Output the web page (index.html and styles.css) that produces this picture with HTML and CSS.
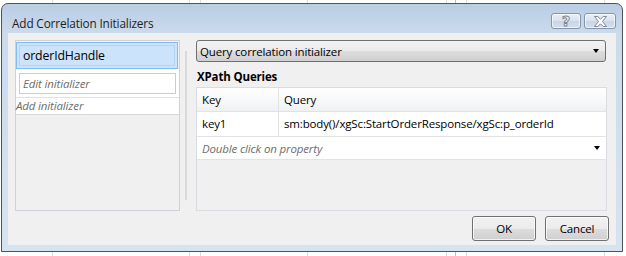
FILE: index.html
```html
<!DOCTYPE html>
<html>
<head>
<meta charset="utf-8">
<link rel="stylesheet" href="styles.css">
</head>
<body>
<div class="desktop">
  <div class="window">
    <div class="titlebar">
      <span class="title">Add Correlation Initializers</span>
      <div class="tb-buttons">
        <div class="tb-btn help"><span class="help-glyph">?</span></div>
        <div class="tb-btn close">
          <svg width="15" height="11" viewBox="0 0 15 11"><path d="M1.5 0.5 H4.8 L7.5 3.2 L10.2 0.5 H13.5 L9.5 5.5 L13.5 10.5 H10.2 L7.5 7.8 L4.8 10.5 H1.5 L5.5 5.5 Z" fill="#fff" stroke="#7d8796" stroke-width="1" stroke-linejoin="round"/></svg>
        </div>
      </div>
    </div>
    <div class="client">
      <div class="main">
        <div class="left-panel">
          <div class="item selected"><span class="item-text">orderIdHandle</span></div>
          <div class="edit-area"><div class="edit">Edit initializer</div></div>
          <div class="add-row">Add initializer</div>
        </div>
        <div class="splitter"><div class="split-line"></div></div>
        <div class="right-panel">
          <div class="combo"><span>Query correlation initializer</span><span class="arrow"></span></div>
          <div class="section-title">XPath Queries</div>
          <div class="grid-box">
            <div class="row header"><div class="cell key">Key</div><div class="cell">Query</div></div>
            <div class="row"><div class="cell key">key1</div><div class="cell">sm:body()/xgSc:StartOrderResponse/xgSc:p_orderId</div></div>
            <div class="new-row"><span>Double click on property</span><span class="arrow"></span></div>
          </div>
        </div>
      </div>
      <div class="buttons">
        <div class="btn">OK</div>
        <div class="btn">Cancel</div>
      </div>
    </div>
  </div>
</div>
</body>
</html>
```

FILE: styles.css
```css
* { box-sizing: border-box; }
html, body { margin: 0; padding: 0; }
body {
  width: 626px;
  height: 256px;
  overflow: hidden;
  font-family: "Open Sans", "Noto Sans", sans-serif;
  font-size: 11.5px;
  letter-spacing: -0.15px;
  color: #000;
  background-color: #fff;
  background-image:
    linear-gradient(#dcdcdc, #dcdcdc),
    linear-gradient(#dcdcdc, #dcdcdc),
    linear-gradient(#dcdcdc, #dcdcdc),
    linear-gradient(#dcdcdc, #dcdcdc),
    linear-gradient(#dcdcdc, #dcdcdc),
    linear-gradient(#a9c4e4, #a9c4e4),
    linear-gradient(#dcdcdc, #dcdcdc),
    linear-gradient(#dcdcdc, #dcdcdc);
  background-size: 1px 256px;
  background-repeat: no-repeat;
  background-position: 52px 0, 189px 0, 200px 0, 307px 0, 446px 0, 455px 0, 466px 0, 604px 0;
}
.desktop { padding: 3px 0 0 1px; }
.window {
  width: 622px;
  height: 249px;
  border: 1px solid #4f5358;
  border-radius: 7px 7px 0 0;
  background: linear-gradient(#b9cde3 0px, #cbdbec 30px, #d6e3f1 100%);
  display: flex;
  flex-direction: column;
}
.titlebar {
  height: 29px;
  display: flex;
  align-items: flex-start;
  justify-content: space-between;
  padding: 0 6px 0 10px;
}
.title {
  font-size: 11.8px;
  color: #1e1e1e;
  line-height: 16px;
  margin-top: 11px;
}
.tb-buttons {
  display: flex;
  gap: 3px;
  margin-top: 9px;
}
.tb-btn {
  height: 16px;
  border: 1px solid #8596ac;
  border-radius: 3px;
  background: linear-gradient(#e9f0f8, #d7e2ee 50%, #c8d6e6 51%, #d3dfec);
  box-shadow: inset 0 0 0 1px rgba(255,255,255,0.6);
  display: flex;
  align-items: center;
  justify-content: center;
}
.tb-btn.help { width: 30px; }
.tb-btn.close { width: 32px; }
.help-glyph {
  font-family: "DejaVu Sans", sans-serif;
  font-weight: bold;
  font-size: 14px;
  line-height: 13px;
  letter-spacing: 0;
  color: #fff;
  -webkit-text-stroke: 1px #7d8796;
}
.client {
  flex: 1;
  margin: 0 6px 6px 6px;
  background: #f0f0f0;
  padding: 7px 7px 4px 7px;
  display: flex;
  flex-direction: column;
}
.main {
  height: 171px;
  display: flex;
}
.left-panel {
  width: 165px;
  border: 1px solid #cfd3d8;
  padding: 1px 1px 0 0;
  display: flex;
  flex-direction: column;
}
.item.selected {
  height: 27px;
  background: #cce4fb;
  border: 1px solid #84bdf0;
  padding: 2px;
  display: flex;
}
.item-text {
  flex: 1;
  border: 1px solid #b4d4f2;
  padding-left: 3px;
  line-height: 19px;
  font-size: 12.3px;
}
.edit-area {
  background: #fff;
  padding: 4px 3px 3px 3px;
  margin-right: -1px;
}
.edit {
  height: 21px;
  border: 1px solid #c9cdd2;
  background: #fff;
  color: #6d6d6d;
  font-style: italic;
  padding-left: 3px;
  line-height: 19px;
}
.add-row {
  height: 18px;
  background: #fff;
  border-top: 1px solid #e1e1e1;
  border-bottom: 1px solid #d6d6d6;
  color: #6d6d6d;
  font-style: italic;
  line-height: 16px;
  margin-right: -1px;
}
.splitter {
  width: 15px;
  padding: 11px 0 11px 5px;
}
.split-line {
  width: 2px;
  height: 100%;
  background: #d9d9d9;
}
.right-panel {
  width: 412px;
  display: flex;
  flex-direction: column;
}
.combo {
  height: 22px;
  margin: 0 1px;
  border: 1px solid #707070;
  border-radius: 3px;
  background: linear-gradient(#f2f2f2, #ebebeb 50%, #dddddd 51%, #cfcfcf);
  display: flex;
  align-items: center;
  justify-content: space-between;
  padding: 0 6px 0 3px;
}
.arrow {
  width: 0;
  height: 0;
  border-left: 3.5px solid transparent;
  border-right: 3.5px solid transparent;
  border-top: 4px solid #000;
}
.section-title {
  margin-top: 5px;
  height: 20px;
  line-height: 20px;
  font-weight: bold;
  padding-left: 2px;
}
.grid-box {
  flex: 1;
  border: 1px solid #d9dde2;
  margin-left: 1px;
  display: flex;
  flex-direction: column;
}
.row {
  height: 25px;
  display: flex;
  background: #fff;
  border-bottom: 1px solid #e3e3e3;
}
.row.header {
  height: 24px;
  background: linear-gradient(#ffffff, #f7f8f9 60%, #eef0f2);
}
.cell {
  padding-left: 5px;
  line-height: 24px;
  flex: 1;
}
.cell.key {
  flex: 0 0 82px;
  border-right: 1px solid #e3e3e3;
}
.new-row {
  height: 23px;
  background: #fff;
  border-bottom: 1px solid #e3e3e3;
  color: #6d6d6d;
  font-style: italic;
  display: flex;
  align-items: center;
  justify-content: space-between;
  padding: 0 6px 0 5px;
}
.buttons {
  margin-top: 5px;
  display: flex;
  justify-content: flex-end;
  gap: 9px;
}
.btn {
  width: 64px;
  height: 25px;
  border: 1px solid #707070;
  border-radius: 3px;
  background: linear-gradient(#f2f2f2, #ebebeb 50%, #dddddd 51%, #cfcfcf);
  box-shadow: inset 0 0 0 1px rgba(255,255,255,0.7);
  display: flex;
  align-items: center;
  justify-content: center;
}
```
